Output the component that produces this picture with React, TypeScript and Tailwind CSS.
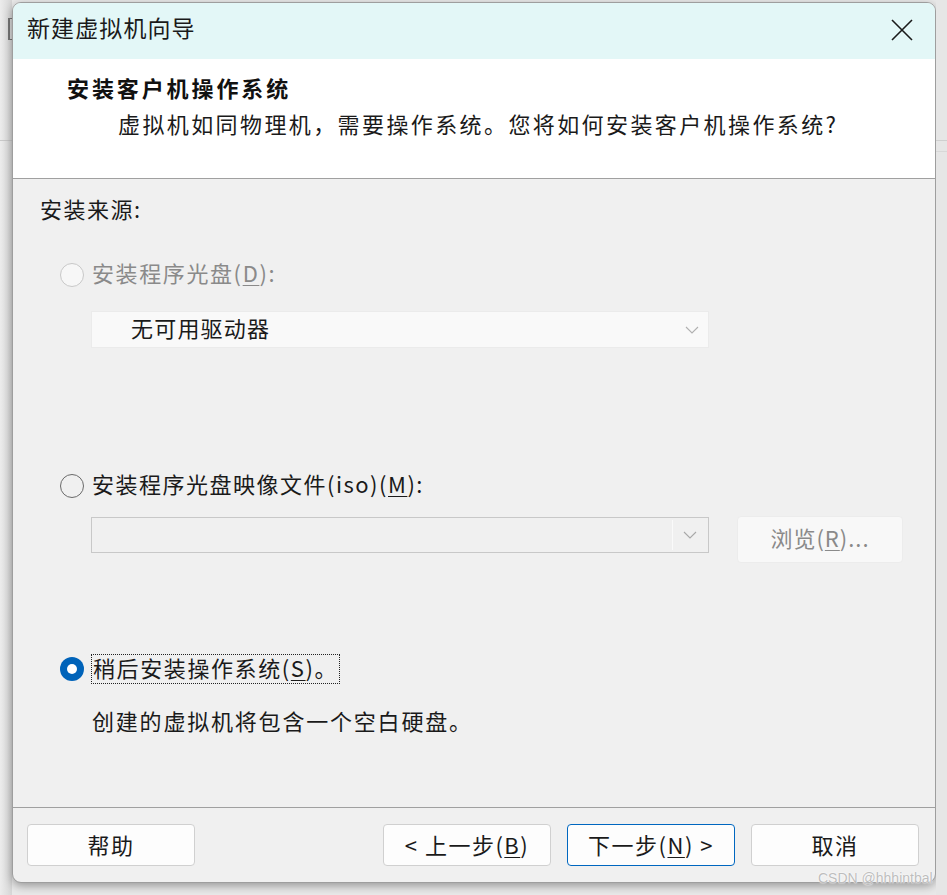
import React from "react";

const font = { fontFamily: '"Noto Sans CJK SC", "Noto Sans", sans-serif' };

function Chevron({ color = "#a6a6a6" }: { color?: string }) {
  return (
    <svg width="14" height="8" viewBox="0 0 14 8" fill="none">
      <path d="M1 1 L7 7 L13 1" stroke={color} strokeWidth="1.1" />
    </svg>
  );
}

function U({ children }: { children: React.ReactNode }) {
  return <span className="underline underline-offset-[3px] decoration-1">{children}</span>;
}

function Btn({ children, primary }: { children: React.ReactNode; primary?: boolean }) {
  return (
    <div
      className={
        "w-[168px] h-[42px] rounded-[4px] bg-[#fdfdfd] flex items-center justify-center text-[22px] text-[#1a1a1a] tracking-[1.5px] pb-[2px] " +
        (primary ? "border border-[#0067c0]" : "border border-[#d0d0d0]")
      }
    >
      {children}
    </div>
  );
}

export default function App() {
  return (
    <div className="w-[947px] h-[895px] bg-[#e9e9e9] flex overflow-hidden relative" style={font}>
      {/* left background strip */}
      <div className="w-[12px] shrink-0 flex flex-col bg-gradient-to-r from-[#ececec] to-[#d6d6d6]">
        <div className="h-[18px]" />
        <div className="ml-[8px] w-[4px] h-[22px] border-l-2 border-t border-b border-[#777]" />
        <div className="h-[100px]" />
        <div className="h-px bg-[#c8c8c8]" />
      </div>

      {/* dialog */}
      <div className="flex flex-col">
        <div className="h-[2px]" />
        <div className="w-[924px] h-[881px] rounded-[9px] border border-[#9e9e9e] bg-[#f0f0f0] flex flex-col overflow-hidden shadow-[0_3px_10px_rgba(0,0,0,0.35)]">
          {/* title bar */}
          <div className="h-[56px] shrink-0 bg-[#e3f7f7] flex items-center justify-between pl-[14px] pr-[22px]">
            <span className="text-[23px] text-[#1a1a1a] tracking-[1.1px] pb-[8px]">新建虚拟机向导</span>
            <svg width="22" height="22" viewBox="0 0 22 22" className="mb-[2px]">
              <path d="M1 1 L21 21 M21 1 L1 21" stroke="#1a1a1a" strokeWidth="1.6" />
            </svg>
          </div>

          {/* header */}
          <div className="h-[120px] shrink-0 bg-white border-b border-[#a0a0a0] flex flex-col">
            <div className="pl-[54px] pt-[12px] text-[22px] font-bold tracking-[2.9px] text-[#111] leading-[32px]">
              安装客户机操作系统
            </div>
            <div className="pl-[105px] pt-[4px] text-[22px] tracking-[2.4px] text-[#1a1a1a] leading-[32px]">
              虚拟机如同物理机，需要操作系统。您将如何安装客户机操作系统?
            </div>
          </div>

          {/* body */}
          <div className="flex-1 flex flex-col border-b border-[#a0a0a0] text-[22px] text-[#1a1a1a]">
            <div className="pl-[27px] pt-[13px] h-[48px] leading-[32px] tracking-[1.5px]">安装来源:</div>

            <div className="h-[32px] mt-[32px] pl-[47px] flex items-center">
              <div className="w-[24px] h-[24px] rounded-full border border-[#c8c8c8] bg-[#f7f7f7]" />
              <span className="ml-[8px] text-[#8a8a8a] tracking-[1.6px] pb-[6px]">
                安装程序光盘(<U>D</U>):
              </span>
            </div>

            <div className="mt-[20px] ml-[78px] w-[618px] h-[37px] bg-[#f9f9f9] border border-[#ebebeb] flex items-center justify-between pl-[39px] pr-[9px]">
              <span className="tracking-[1.2px] pb-[4px]">无可用驱动器</span>
              <Chevron color="#b0b0b0" />
            </div>

            <div className="h-[32px] mt-[122px] pl-[47px] flex items-center">
              <div className="w-[24px] h-[24px] rounded-full border-[1.5px] border-[#6a6a6a]" />
              <span className="ml-[8px] tracking-[1.5px] pb-[6px]">
                安装程序光盘映像文件(iso)(<U>M</U>):
              </span>
            </div>

            <div className="mt-[14px] ml-[78px] flex items-start">
              <div className="mt-[1px] w-[618px] h-[36px] border border-[#c8c8c8] bg-[#f0f0f0] flex items-center p-[2px]">
                <div className="w-[579px] h-full bg-[#f0f0f0] border-r border-[#fafafa]" />
                <div className="flex-1 flex justify-center">
                  <Chevron color="#a8a8a8" />
                </div>
              </div>
              <div className="ml-[28px] w-[166px] h-[47px] rounded-[4px] bg-[#f8f8f8] border border-[#ececec] flex items-center justify-center text-[#8a8a8a] tracking-[1px] pb-[4px]">
                浏览(<U>R</U>)...
              </div>
            </div>

            <div className="h-[30px] mt-[91px] pl-[47px] flex items-center">
              <div className="w-[24px] h-[24px] rounded-full bg-[#0063b9] flex items-center justify-center">
                <div className="w-[10px] h-[10px] rounded-full bg-white" />
              </div>
              <span className="ml-[7px] h-[30px] px-[1px] pb-[3px] border border-dotted border-[#222] flex items-center tracking-[1.6px]">
                稍后安装操作系统(<U>S</U>)。
              </span>
            </div>

            <div className="h-[32px] mt-[20px] pl-[79px] leading-[32px] tracking-[1.8px]">
              创建的虚拟机将包含一个空白硬盘。
            </div>
          </div>

          {/* footer */}
          <div className="h-[74px] shrink-0 flex pt-[16px] pl-[14px] pr-[16px]">
            <Btn>帮助</Btn>
            <div className="flex-1" />
            <div className="flex gap-[16px]">
              <Btn>
                &lt;&nbsp;上一步(<U>B</U>)
              </Btn>
              <Btn primary>
                下一步(<U>N</U>)&nbsp;&gt;
              </Btn>
              <Btn>取消</Btn>
            </div>
          </div>
        </div>
      </div>

      {/* right background strip */}
      <div className="flex-1 flex flex-col bg-[#e6e6e6]">
        <div className="h-[140px]" />
        <div className="h-px bg-[#cfcfcf]" />
        <div className="h-[10px]" />
        <div className="h-px bg-[#d8d8d8]" />
      </div>

      {/* watermark */}
      <div
        className="absolute left-[818px] top-[868px] text-[14px] text-[#bdbdbd]"
        style={{ fontFamily: '"Liberation Sans", Arial, sans-serif', textShadow: "0 0 2px #fff, 0 0 1px #fff" }}
      >
        CSDN @hhhintbal
      </div>
    </div>
  );
}
